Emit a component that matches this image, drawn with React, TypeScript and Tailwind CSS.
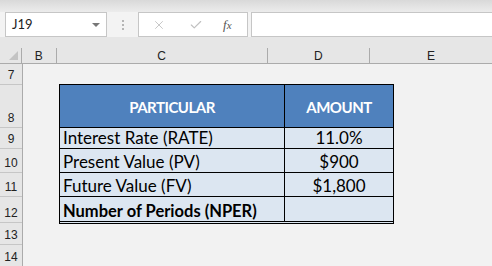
import { X, Check } from 'lucide-react';

const rowHeads = [
  { n: '7', h: 'h-[21px]' },
  { n: '8', h: 'h-[43px]' },
  { n: '9', h: 'h-[21px]' },
  { n: '10', h: 'h-[24px]' },
  { n: '11', h: 'h-[24px]' },
  { n: '12', h: 'h-[26px]' },
  { n: '13', h: 'h-[22px]' },
  { n: '14', h: 'h-[22px]' },
];

const dataRows = [
  { label: 'Interest Rate (RATE)', value: '11.0%', h: 'h-[21px]' },
  { label: 'Present Value (PV)', value: '$900', h: 'h-[24px]' },
  { label: 'Future Value (FV)', value: '$1,800', h: 'h-[24px]' },
];

function FormulaBar() {
  return (
    <div className="flex h-[25px] items-stretch bg-[#f3f3f3]">
      <div className="ml-[5px] flex w-[102px] items-center justify-between border border-[#c6c6c6] bg-white pl-[6px] pr-[6px] text-[13px] text-[#222]">
        <span>J19</span>
        <span className="h-0 w-0 border-x-[4px] border-t-[4px] border-x-transparent border-t-[#777]" />
      </div>
      <div className="flex w-[31px] flex-col items-center justify-center gap-[2px]">
        <span className="h-[2px] w-[2px] bg-[#b5b5b5]" />
        <span className="h-[2px] w-[2px] bg-[#b5b5b5]" />
        <span className="h-[2px] w-[2px] bg-[#b5b5b5]" />
      </div>
      <div className="flex w-[110px] items-center border border-[#c6c6c6] bg-white">
        <X className="ml-[13px] h-[14px] w-[14px] text-[#c0c0c0]" strokeWidth={1.5} />
        <Check className="ml-[23px] h-[14px] w-[14px] text-[#c0c0c0]" strokeWidth={2} />
        <span className="ml-[20px] font-['Liberation_Serif',serif] text-[13px] italic text-[#555]">
          f<span className="text-[11px]">x</span>
        </span>
      </div>
      <div className="ml-[3px] flex-1 border border-r-0 border-[#c6c6c6] bg-white" />
    </div>
  );
}

function ColumnHeader() {
  const cell = 'flex items-center justify-center border-r border-[#ababab] mt-[11px]';
  return (
    <div className="flex h-[27px] border-b border-[#ababab] bg-[#e6e6e6] font-['Liberation_Sans',sans-serif] text-[12px] text-[#222]">
      <div className={`${cell} w-[23px] items-end justify-end pb-[3px] pr-[3px]`}>
        <span className="h-0 w-0 border-b-[9px] border-l-[9px] border-b-[#c3c3c3] border-l-transparent" />
      </div>
      <div className={`${cell} w-[37px]`}>B</div>
      <div className={`${cell} w-[225px]`}>C</div>
      <div className={`${cell} w-[109px]`}>D</div>
      <div className={`${cell} w-[130px] border-r-0`}>E</div>
    </div>
  );
}

export default function App() {
  return (
    <div className="h-[266px] w-[492px] overflow-hidden bg-[#f3f3f3] font-['Lato',sans-serif]">
      <div className="h-[12px] bg-gradient-to-b from-[#d9d9d9] to-[#ececec]" />
      <FormulaBar />
      <ColumnHeader />
      <div className="flex">
        <div className="w-[23px] shrink-0 border-r border-[#ababab] bg-[#e6e6e6] font-['Liberation_Sans',sans-serif] text-[12px] text-[#222]">
          {rowHeads.map((r) => (
            <div key={r.n} className={`${r.h} flex items-end justify-center border-b border-[#c6c6c6] pb-[2px] leading-[14px]`}>
              {r.n}
            </div>
          ))}
        </div>
        <div className="flex-1 bg-[#f2f2f2] pl-[36px] pt-[20px]">
          <div className="w-[335px] border-x border-t border-black text-[17px] text-black">
            <div className="flex h-[43px] border-b border-black bg-[#4f81bd] text-[15px] font-bold tracking-[-0.5px] text-white">
              <div className="flex w-[225px] items-center justify-center border-r border-black pt-[2px]">PARTICULAR</div>
              <div className="flex flex-1 items-center justify-center pt-[2px]">AMOUNT</div>
            </div>
            {dataRows.map((r) => (
              <div key={r.label} className={`${r.h} flex border-b border-black bg-[#dce6f1] leading-[18px]`}>
                <div className="flex w-[225px] items-end border-r border-black pb-[1px] pl-[3px]">{r.label}</div>
                <div className="flex flex-1 items-end justify-center pb-[1px]">{r.value}</div>
              </div>
            ))}
            <div className="flex h-[27px] border-b-[3px] border-double border-black bg-[#dce6f1] text-[16.5px] font-bold leading-[18px]">
              <div className="flex w-[225px] items-end border-r border-black pb-[1px] pl-[3px]">Number of Periods (NPER)</div>
              <div className="flex-1" />
            </div>
          </div>
        </div>
      </div>
    </div>
  );
}
